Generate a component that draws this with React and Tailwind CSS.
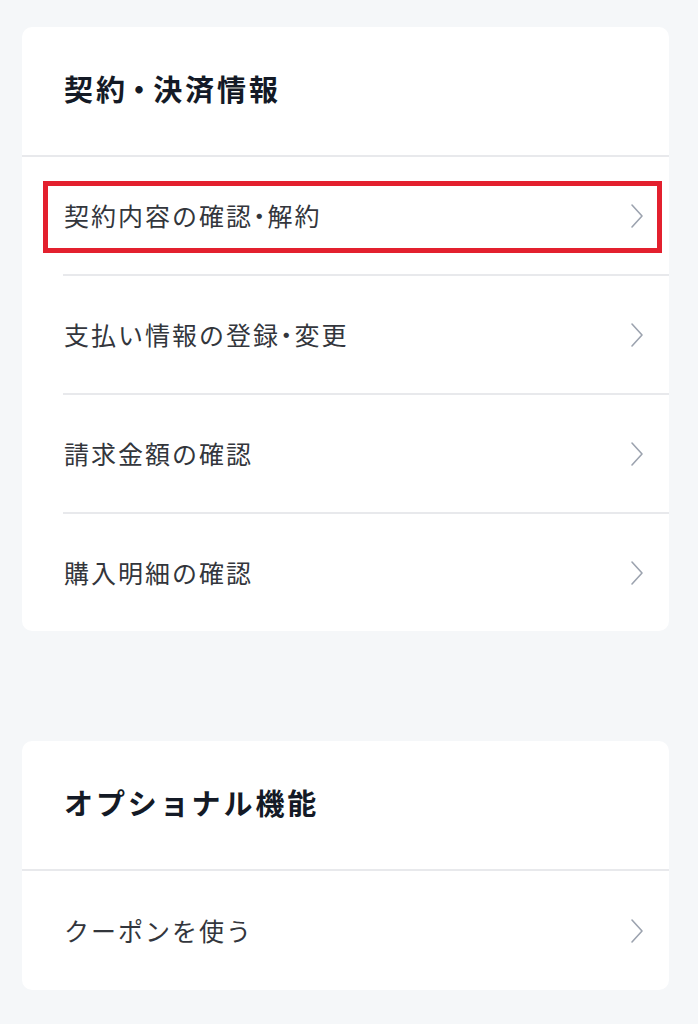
import React from 'react';

// the original's font sets the middle dot narrow; palt gives the same here
const Label = ({ text, dotGap }) => {
  const parts = text.split('・');
  return parts.map((p, i) => (
    <React.Fragment key={i}>
      {p}
      {i < parts.length - 1 && (
        <span className={`[font-feature-settings:'palt'] ${dotGap ? 'mx-[4px]' : ''}`}>・</span>
      )}
    </React.Fragment>
  ));
};

const Chevron = () => (
  <svg width="16" height="28" viewBox="0 0 16 28" fill="none" className="shrink-0">
    <path d="M3 3 L13 14 L3 25" stroke="#9ca3af" strokeWidth="1.6" strokeLinecap="round" strokeLinejoin="round" />
  </svg>
);

const Row = ({ label, last, highlight, tall }) => (
  <div className="relative">
    <div className={`flex items-center justify-between pl-[42px] pr-[24px] ${tall ? 'h-[119px]' : 'h-[117px]'}`}>
      <span className="text-[25px] tracking-[0.08em] text-[#33363c]">
        <Label text={label} />
      </span>
      <Chevron />
    </div>
    {!last && <div className="ml-[41px] h-[2px] bg-[#e8e9ec]" />}
    {highlight && (
      <div className="absolute left-[21px] right-[7px] top-[24px] h-[72px] border-[5px] border-[#e3202e]" />
    )}
  </div>
);

const Section = ({ title, items, tallLast }) => (
  <div className="bg-white rounded-[10px]">
    <div className="h-[128px] flex items-center pl-[42px] pb-[4px]">
      <h2 className="text-[29px] font-bold tracking-[0.1em] text-[#141a26]">
        <Label text={title} dotGap />
      </h2>
    </div>
    <div className="h-[2px] bg-[#e8e9ec]" />
    {items.map((it, i) => (
      <Row
        key={it.label}
        label={it.label}
        highlight={it.highlight}
        last={i === items.length - 1}
        tall={tallLast && i === items.length - 1}
      />
    ))}
  </div>
);

export default function App() {
  return (
    <div
      className="min-h-[1024px] bg-[#f5f7f9] px-[22px] pt-[27px] pb-[34px]"
      style={{ fontFamily: '"Noto Sans CJK JP", "Noto Sans", sans-serif' }}
    >
      <div className="w-[647px]">
        <Section
          title="契約・決済情報"
          items={[
            { label: '契約内容の確認・解約', highlight: true },
            { label: '支払い情報の登録・変更' },
            { label: '請求金額の確認' },
            { label: '購入明細の確認' },
          ]}
        />
        <div className="h-[110px]" />
        <Section title="オプショナル機能" items={[{ label: 'クーポンを使う' }]} tallLast />
      </div>
    </div>
  );
}
